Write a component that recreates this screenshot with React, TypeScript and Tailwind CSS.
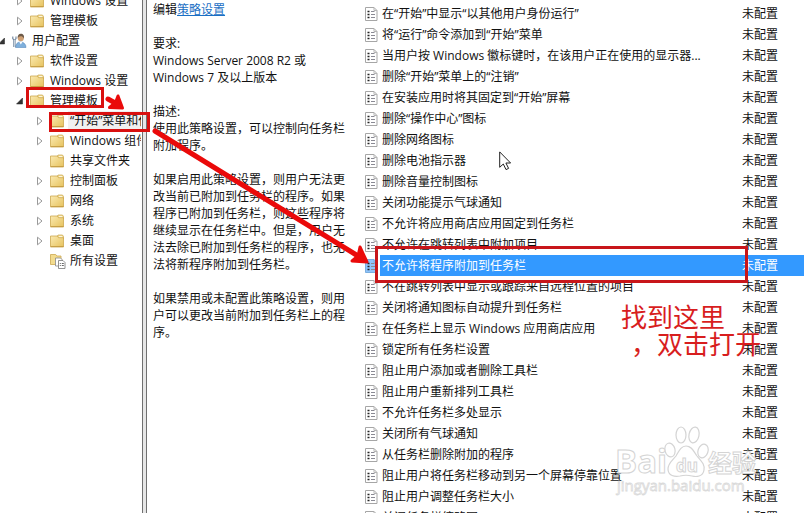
import clsx from "clsx";

interface TreeNode {
  label: string;
  level: 0 | 1 | 2;
  state: "open" | "closed" | "leaf";
  icon: "folder" | "user" | "all";
  active?: boolean;
}

const nodes: TreeNode[] = [
  { label: "Windows 设置", level: 1, state: "closed", icon: "folder" },
  { label: "管理模板", level: 1, state: "closed", icon: "folder" },
  { label: "用户配置", level: 0, state: "open", icon: "user" },
  { label: "软件设置", level: 1, state: "closed", icon: "folder" },
  { label: "Windows 设置", level: 1, state: "closed", icon: "folder" },
  { label: "管理模板", level: 1, state: "open", icon: "folder" },
  { label: "“开始”菜单和任务栏", level: 2, state: "closed", icon: "folder", active: true },
  { label: "Windows 组件", level: 2, state: "closed", icon: "folder" },
  { label: "共享文件夹", level: 2, state: "leaf", icon: "folder" },
  { label: "控制面板", level: 2, state: "closed", icon: "folder" },
  { label: "网络", level: 2, state: "closed", icon: "folder" },
  { label: "系统", level: 2, state: "closed", icon: "folder" },
  { label: "桌面", level: 2, state: "closed", icon: "folder" },
  { label: "所有设置", level: 2, state: "leaf", icon: "all" },
];

const policies = [
  "在“开始”中显示“以其他用户身份运行”",
  "将“运行”命令添加到“开始”菜单",
  "当用户按 Windows 徽标键时，在该用户正在使用的显示器...",
  "删除“开始”菜单上的“注销”",
  "在安装应用时将其固定到“开始”屏幕",
  "删除“操作中心”图标",
  "删除网络图标",
  "删除电池指示器",
  "删除音量控制图标",
  "关闭功能提示气球通知",
  "不允许将应用商店应用固定到任务栏",
  "不允许在跳转列表中附加项目",
  "不允许将程序附加到任务栏",
  "不在跳转列表中显示或跟踪来自远程位置的项目",
  "关闭将通知图标自动提升到任务栏",
  "在任务栏上显示 Windows 应用商店应用",
  "锁定所有任务栏设置",
  "阻止用户添加或者删除工具栏",
  "阻止用户重新排列工具栏",
  "不允许任务栏多处显示",
  "关闭所有气球通知",
  "从任务栏删除附加的程序",
  "阻止用户将任务栏移动到另一个屏幕停靠位置",
  "阻止用户调整任务栏大小",
  "关闭任务栏缩略图",
];

const selected = "不允许将程序附加到任务栏";

function Arrow({ state }: { state: TreeNode["state"] }) {
  if (state === "leaf") return null;
  return (
    <svg viewBox="0 0 8 10" className="h-2.5 w-2">
      {state === "closed" ? (
        <path d="M1.5 1.2v7.6L6 5z" fill="#fff" stroke="#999" />
      ) : (
        <path d="M6.5 2v6H.5z" fill="#333" stroke="#222" strokeWidth=".5" />
      )}
    </svg>
  );
}

function FolderIcon() {
  return (
    <svg viewBox="0 0 16 16" className="size-4 shrink-0">
      <defs>
        <linearGradient id="folder" x1="0" y1="0" x2="1" y2="1">
          <stop offset="0" stopColor="#fbeab0" />
          <stop offset="1" stopColor="#e6c25e" />
        </linearGradient>
      </defs>
      <path d="M7 3.5 8 2h4.5l1 1.5V6H7z" fill="#f3dc93" stroke="#c9a64f" strokeWidth=".7" />
      <path d="M.5 3h6.8l1.2 1.7h5V14H.5z" fill="url(#folder)" stroke="#cda850" strokeWidth=".8" />
      <path d="M9 3.6h3.2" stroke="#fff" strokeWidth=".8" />
      <path d="M1 13.5h12.4" stroke="#c2983f" strokeWidth=".8" />
    </svg>
  );
}

function UserIcon() {
  return (
    <svg viewBox="0 0 16 16" className="size-4 shrink-0">
      <path d="M3.500 14.500c0-3.500 2-5.500 5-5.500s5.500 2 5.500 5.500z" fill="#7fb0dc" stroke="#5a8cbd" strokeWidth=".6" />
      <path d="m7.300 9 1.500 2.600L10.400 9z" fill="#fff" />
      <circle cx="8.800" cy="5.200" r="3" fill="#cfa074" />
      <path d="M5.700 5.400c-.4-3 1-4.700 3.200-4.700s3.700 1.700 3 4.700c-.8-1.700-1.800-2.200-3.400-2.200-1.200 0-2.200.7-2.800 2.200z" fill="#6d5a48" />
      <path d="M.8 3.500v2.200l1 1v7.300M4 3.500v2.200l-1 1v7.300" fill="none" stroke="#6a8099" strokeWidth="1.100" />
      <path d="M2.400 7v7" stroke="#cfdbe6" />
    </svg>
  );
}

function AllSettingsIcon() {
  return (
    <svg viewBox="0 0 16 16" className="size-4 shrink-0">
      <path d="M.5 1.500h5.200L6.800 3H11v8.500H.5z" fill="#f3dc8f" stroke="#cda850" strokeWidth=".8" />
      <path d="M5.500 5h5l2 2v6h-7z" fill="#fff" stroke="#888" strokeWidth=".8" />
      <path d="M8.500 7.500h4.500l2 2v6H8.500z" fill="#fff" stroke="#777" strokeWidth=".8" />
      <path d="M9.800 10.500h1m1 0h2m-4 2h1m1 0h2" stroke="#555" strokeWidth=".9" />
    </svg>
  );
}

function PolicyIcon({ active }: { active: boolean }) {
  return (
    <svg viewBox="0 0 14 16" className="h-4 w-3.5">
      <path d="M1.500 1.500H10l3 3v10H1.500z" fill={active ? "#8fc4fb" : "#fff"} stroke={active ? "#7aaedf" : "#a6a6a6"} />
      <path d="M10 1.500v3h3" fill="none" stroke={active ? "#7aaedf" : "#b5b5b5"} />
      <path d="M3.500 5.500h2M3.500 8.500h2M3.500 11.500h2" stroke="#222" strokeWidth="1.500" />
      <path d="M7 5.500h3.500M7 8.500h4M7 11.500h4" stroke="#8a8a94" />
    </svg>
  );
}

function ConsoleTree() {
  return (
    <nav className="w-[142px] shrink-0 overflow-hidden pr-px">
      <ul className="-mt-[9px] overflow-hidden">
        {nodes.map((node, i) => (
          <li
            key={i}
            className={clsx(
              "flex h-5 items-center whitespace-nowrap",
              node.level === 0 && "-ml-0.5",
              node.level === 1 && "pl-4",
              node.level === 2 && "pl-9"
            )}
          >
            <span className="flex w-3.5 shrink-0 items-center">
              <Arrow state={node.state} />
            </span>
            {node.icon === "folder" && <FolderIcon />}
            {node.icon === "user" && <UserIcon />}
            {node.icon === "all" && <AllSettingsIcon />}
            <span className={clsx("ml-0.5 px-0.5 leading-5", node.active && "bg-[#f0f0f0]")}>
              {node.label}
            </span>
          </li>
        ))}
      </ul>
    </nav>
  );
}

function Description() {
  return (
    <section className="w-[216px] shrink-0 space-y-[17px] pt-px pr-[18px] pl-1.5 leading-[17px]">
      <p>
        编辑
        <a href="#edit" className="text-[#1a6fc4] underline">策略设置</a>
      </p>
      <div>
        <h2>要求:</h2>
        <p>Windows Server 2008 R2 或 Windows 7 及以上版本</p>
      </div>
      <div>
        <h2>描述:</h2>
        <p>使用此策略设置，可以控制向任务栏附加程序。</p>
      </div>
      <p>
        如果启用此策略设置，则用户无法更改当前已附加到任务栏的程序。如果程序已附加到任务栏，则这些程序将继续显示在任务栏中。但是，用户无法去除已附加到任务栏的程序，也无法将新程序附加到任务栏。
      </p>
      <p>如果禁用或未配置此策略设置，则用户可以更改当前附加到任务栏上的程序。</p>
    </section>
  );
}

function PolicyList() {
  return (
    <div className="min-w-0 flex-1 pt-[3px]">
      <table className="w-full table-fixed border-collapse">
        <colgroup>
          <col className="w-[17px]" />
          <col />
          <col className="w-16" />
        </colgroup>
        <tbody>
          {policies.map((name) => {
            const active = name === selected;
            return (
              <tr key={name} className="h-[21px] leading-5">
                <td className="p-0 pl-px">
                  <PolicyIcon active={active} />
                </td>
                <td className={clsx("truncate p-0 pl-0.5", active && "bg-[#3399ff] text-white")}>
                  {name}
                </td>
                <td className={clsx("p-0 pl-0.5 whitespace-nowrap", active && "bg-[#3399ff] text-white")}>
                  未配置
                </td>
              </tr>
            );
          })}
        </tbody>
      </table>
    </div>
  );
}

function Watermark() {
  return (
    <svg viewBox="0 0 150 76" className="absolute top-[424px] left-[614px] h-[76px] w-[150px]">
      <g fill="#fff" fillOpacity=".8" stroke="#d4d4d4" strokeWidth="1.200">
        <ellipse cx="56" cy="26" rx="5" ry="7" transform="rotate(-15 56 26)" />
        <ellipse cx="67" cy="11" rx="5" ry="8" />
        <ellipse cx="80" cy="11" rx="5" ry="8" transform="rotate(12 80 11)" />
        <ellipse cx="89" cy="27" rx="5" ry="7" transform="rotate(18 89 27)" />
        <path d="M72 22c6 0 8 6 11 10 4 5 8 8 7 14-1 7-8 7-12 6-4-1-8-1-12 0-5 1-12 0-12-7 0-6 5-9 8-13 3-5 5-10 10-10z" />
      </g>
      <g fill="#fff" stroke="#d4d4d4" strokeWidth="1" className="font-bold">
        <text x="1" y="49" fontSize="33">Bai</text>
        <text x="62" y="48" fontSize="17">du</text>
        <text x="94" y="48" fontSize="24">经验</text>
      </g>
      <text x="3" y="67" fontSize="15" fill="#fff" stroke="#dadada" strokeWidth=".8">
        jingyan.baidu.com
      </text>
    </svg>
  );
}

function Annotations() {
  return (
    <div className="pointer-events-none absolute inset-0">
      <div className="absolute top-[87px] left-[26px] h-[21px] w-[78px] border-3 border-[#d9100f]" />
      <div className="absolute top-[112px] left-[49px] h-5 w-[101px] border-3 border-[#d9100f]" />
      <div className="absolute top-[246px] left-[375px] h-[37px] w-[373px] border-3 border-[#c8161a]" />
      <svg viewBox="0 0 400 280" className="absolute top-0 left-0 h-[280px] w-[400px]">
        <g fill="#ea0a0a" stroke="#ea0a0a" strokeLinejoin="round" strokeLinecap="round">
          <path d="M155 131 358 256" fill="none" strokeWidth="5" />
          <path d="m360 247 7 15-15-1 6-5z" strokeWidth="3" />
          <path d="m108 99 9 5" fill="none" strokeWidth="5" />
          <path d="m118 96 4.500 12-13-.5 6-5z" strokeWidth="3" />
        </g>
      </svg>
      <p className="absolute top-[304px] left-[621px] text-[26px] leading-[27px] whitespace-nowrap text-[#d81e1e]">
        找到这里
        <br />
        <span className="pl-2.5">，双击打开</span>
      </p>
      <svg viewBox="0 0 14 20" className="absolute top-[151px] left-[499px] h-5 w-3.5">
        <path d="M.7.9v15.400l3.600-3.300 2.700 5.600 2.600-1.200-2.700-5.400h4.700z" fill="#fff" stroke="#222" />
      </svg>
      <Watermark />
    </div>
  );
}

export default function App() {
  return (
    <main className="relative flex h-screen overflow-hidden bg-white font-['Open_Sans','Noto_Sans_CJK_SC',sans-serif] text-xs text-[#111]">
      <ConsoleTree />
      <div className="w-[5px] shrink-0 border-r border-l border-[#707070] bg-[#e6e6e6]" />
      <Description />
      <PolicyList />
      <Annotations />
    </main>
  );
}
